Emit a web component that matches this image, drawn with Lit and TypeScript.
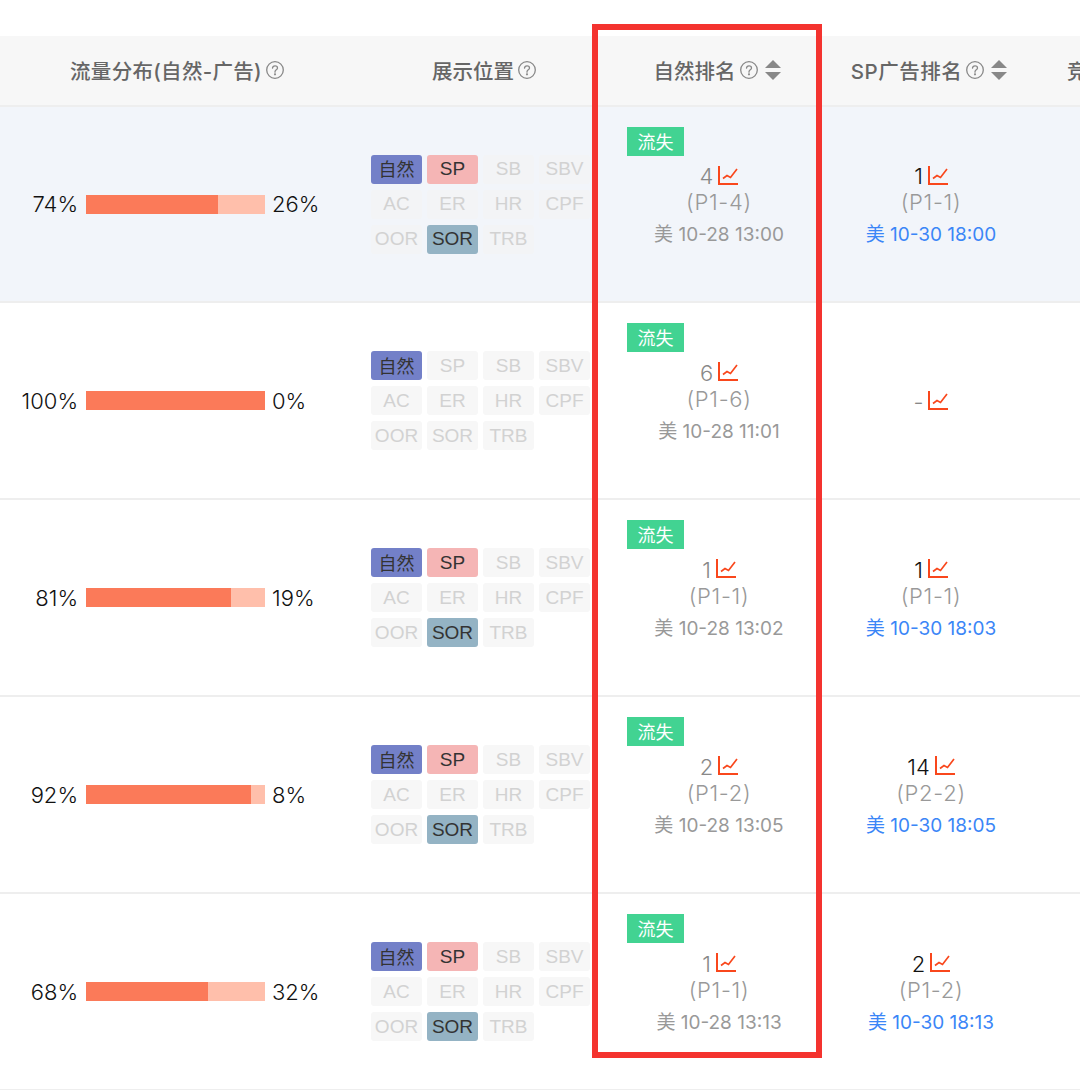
import { LitElement, html, css, svg } from "lit";
import { customElement } from "lit/decorators.js";

type Row = { pct: number; rank: string; page: string; date: string; sp: string; spPage?: string; spDate?: string; sponsored: boolean };

const rows: Row[] = [
  { pct: 74, rank: "4", page: "(P1-4)", date: "美 10-28 13:00", sp: "1", spPage: "(P1-1)", spDate: "美 10-30 18:00", sponsored: true },
  { pct: 100, rank: "6", page: "(P1-6)", date: "美 10-28 11:01", sp: "-", sponsored: false },
  { pct: 81, rank: "1", page: "(P1-1)", date: "美 10-28 13:02", sp: "1", spPage: "(P1-1)", spDate: "美 10-30 18:03", sponsored: true },
  { pct: 92, rank: "2", page: "(P1-2)", date: "美 10-28 13:05", sp: "14", spPage: "(P2-2)", spDate: "美 10-30 18:05", sponsored: true },
  { pct: 68, rank: "1", page: "(P1-1)", date: "美 10-28 13:13", sp: "2", spPage: "(P1-2)", spDate: "美 10-30 18:13", sponsored: true },
];

const tags = ["自然", "SP", "SB", "SBV", "AC", "ER", "HR", "CPF", "OOR", "SOR", "TRB"];

const help = html`<svg class="help" width="18" height="18" viewBox="0 0 18 18" fill="none" stroke="#888" stroke-width="1.3" stroke-linecap="round">
  <circle cx="9" cy="9" r="8.3"></circle>
  <path d="M6.5 7.1C6.6 5.6 7.6 4.8 9 4.8c1.5 0 2.5 .9 2.5 2.1 0 1.9-2.5 1.9-2.5 3.9v.4"></path>
  <circle cx="9" cy="13.3" r=".45" fill="#888"></circle>
</svg>`;

const sort = html`<svg class="sort" width="16" height="20" viewBox="0 0 16 20" fill="#888">
  <path d="M8 0L16 8H0Z"></path>
  <path d="M0 12H16L8 20Z"></path>
</svg>`;

const chart = html`<svg class="chart" width="20" height="19" viewBox="0 0 20 19" fill="none" stroke="#f9471c" stroke-width="2">
  ${svg`<path d="M1 0V18H20"></path><path d="M5 12.5L9 9.5L12.5 11.5L19 3" stroke-width="1.7"></path>`}
</svg>`;

@customElement("app-root")
export class AppRoot extends LitElement {
  static styles = css`
    :host {
      display: block;
      position: relative;
      width: 1080px;
      height: 1090px;
      overflow: hidden;
      background: #fff;
      padding-top: 36px;
      box-sizing: border-box;
      font-family: "Inter", "Noto Sans CJK SC", sans-serif;
    }
    .grid {
      display: grid;
      grid-template-columns: 354px 250px 226px 202px 48px;
    }
    .head {
      height: 71px;
      padding-bottom: 2px;
      background: #f7f7f7;
      border-bottom: 2px solid #eeeeee;
      box-sizing: border-box;
      color: #666;
      font-size: 20.5px;
      font-family: "Inter", "Noto Sans CJK SC", sans-serif;
      font-weight: 500;
      align-items: center;
    }
    .th {
      display: flex;
      align-items: center;
      justify-content: center;
      gap: 4px;
      white-space: nowrap;
      overflow: hidden;
    }
    .th.wide { letter-spacing: 0.3px; }
    .th.sp { letter-spacing: 0.5px; padding-right: 4px; }
    .th .sort { margin-left: 3px; }
    .th.shift { padding-left: 10px; }
    .th.last { justify-content: flex-start; padding-left: 35px; }
    .row {
      height: 197px;
      border-bottom: 2px solid #eeeeee;
      box-sizing: border-box;
      background: #fff;
      align-items: center;
    }
    .row.first { height: 196px; background: #f2f5fa; }
    .traffic {
      display: flex;
      align-items: center;
      font-size: 22px;
      font-weight: 300;
      color: #111;
      font-family: "Inter", sans-serif;
    }
    .traffic .l { width: 78px; text-align: right; margin-right: 8px; }
    .traffic .r { margin-left: 7px; }
    .bar { width: 179px; height: 19px; background: #ffbfab; display: flex; }
    .bar div { background: #fb7a59; height: 100%; }
    .tags {
      display: grid;
      grid-template-columns: repeat(4, 51px);
      grid-auto-rows: 29px;
      column-gap: 5px;
      row-gap: 6px;
      padding-left: 17px;
    }
    .tag {
      border-radius: 3px;
      background: #f7f7f7;
      color: #d2d2d2;
      font-size: 19px;
      display: flex;
      align-items: center;
      justify-content: center;
      font-family: "Liberation Sans", "Noto Sans CJK SC", sans-serif;
    }
    .first .tag { background: #f3f4f6; }
    .tag.natural, .first .tag.natural { background: #7380c8; color: #333; font-size: 18px; padding-bottom: 2px; box-sizing: border-box; }
    .tag.sp, .first .tag.sp { background: #f5b5b5; color: #333; }
    .tag.sor, .first .tag.sor { background: #94b3c4; color: #333; }
    .cell {
      position: relative;
      height: 100%;
      display: flex;
      flex-direction: column;
      align-items: center;
      justify-content: center;
      text-align: center;
      padding-top: 2px;
      box-sizing: border-box;
    }
    .cell.own { padding-left: 4px; }
    .badge {
      position: absolute;
      left: 23px;
      top: 20px;
      width: 57px;
      height: 29px;
      padding-bottom: 2px;
      box-sizing: border-box;
      background: #42d392;
      color: #fff;
      font-size: 18px;
      font-family: "Noto Sans CJK SC", sans-serif;
      display: flex;
      align-items: center;
      justify-content: center;
    }
    .num {
      display: flex;
      align-items: center;
      gap: 5px;
      height: 26px;
      font-size: 22px;
      font-weight: 300;
      color: #888;
    }
    .num.dark { color: #111; }
    .chart { margin-top: -2px; }
    .page { height: 26px; line-height: 26px; font-size: 22px; font-weight: 300; color: #999; letter-spacing: 0.7px; }
    .date { margin-top: 8px; height: 24px; line-height: 24px; font-size: 19px; font-weight: 400; color: #999; white-space: nowrap; }
    .date.blue { color: #3b86f7; }
    .frame {
      position: absolute;
      left: 592px;
      top: 24px;
      width: 230px;
      height: 1034px;
      border: 6px solid #f4332f;
      box-sizing: border-box;
      pointer-events: none;
    }
  `;

  render() {
    return html`
      <div class="grid head">
        <div class="th wide">流量分布(自然-广告)${help}</div>
        <div class="th shift">展示位置${help}</div>
        <div class="th">自然排名${help}${sort}</div>
        <div class="th sp">SP广告排名${help}${sort}</div>
        <div class="th last">竞</div>
      </div>
      ${rows.map((r, i) => html`
        <div class="grid row ${i === 0 ? "first" : ""}">
          <div class="traffic">
            <span class="l">${r.pct}%</span>
            <div class="bar"><div style="width:${r.pct}%"></div></div>
            <span class="r">${100 - r.pct}%</span>
          </div>
          <div class="tags">
            ${tags.map((t) => {
              const cls = t === "自然" ? "natural" : r.sponsored && t === "SP" ? "sp" : r.sponsored && t === "SOR" ? "sor" : "";
              return html`<div class="tag ${cls}">${t}</div>`;
            })}
          </div>
          <div class="cell own">
            <div class="badge">流失</div>
            <div class="num">${r.rank}${chart}</div>
            <div class="page">${r.page}</div>
            <div class="date">${r.date}</div>
          </div>
          <div class="cell">
            <div class="num ${r.sponsored ? "dark" : ""}">${r.sp}${chart}</div>
            ${r.sponsored ? html`<div class="page">${r.spPage}</div><div class="date blue">${r.spDate}</div>` : ""}
          </div>
          <div></div>
        </div>
      `)}
      <div class="frame"></div>
    `;
  }
}
